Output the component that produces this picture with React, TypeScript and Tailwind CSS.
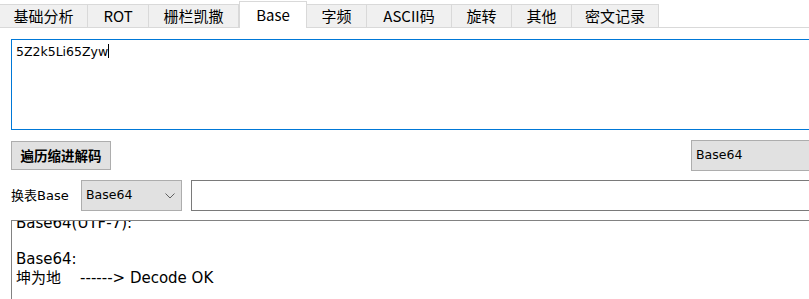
import React from "react";

const tabs = [
  { label: "基础分析", w: "w-[88px]" },
  { label: "ROT", w: "w-[61px]" },
  { label: "栅栏凯撒", w: "w-[90px]" },
  { label: "Base", w: "w-[68px]", active: true },
  { label: "字频", w: "w-[60px]" },
  { label: "ASCII码", w: "w-[85px]" },
  { label: "旋转", w: "w-[60px]" },
  { label: "其他", w: "w-[60px]" },
  { label: "密文记录", w: "w-[87px]" },
];

export default function App() {
  return (
    <div className="w-[809px] h-[299px] overflow-hidden bg-white relative text-black font-['DejaVu_Sans','Noto_Sans_CJK_SC',sans-serif]">
      {/* tab strip */}
      <div className="flex items-end h-[28px] border-b border-[#d9d9d9] font-['Noto_Sans_CJK_SC','DejaVu_Sans',sans-serif]">
        {tabs.map((t) =>
          t.active ? (
            <div
              key={t.label}
              className={`${t.w} h-[27px] -mb-px bg-white border border-b-0 border-[#d9d9d9] flex items-center justify-center text-[15px] shrink-0`}
            >
              {t.label}
            </div>
          ) : (
            <div
              key={t.label}
              className={`${t.w} h-[23px] bg-[#f0f0f0] border-t border-r border-[#d9d9d9] flex items-center justify-center text-[15px] shrink-0`}
            >
              {t.label}
            </div>
          )
        )}
      </div>

      <div className="pl-[11px]">
        {/* input textarea */}
        <div className="mt-[11px] w-[810px] h-[91px] border border-[#0078d7] px-[4px] pt-[4px] text-[12.5px] leading-[16px]">
          5Z2k5Li65Zyw<span className="inline-block w-px h-[14px] bg-black align-[-2px]" />
        </div>

        {/* button row */}
        <div className="mt-[10px] w-[809px] h-[31px] flex items-center justify-between">
          <div className="w-[100px] h-[29px] bg-[#e1e1e1] border border-[#adadad] flex items-center justify-center text-[13.5px] font-bold shrink-0 font-['Noto_Sans_CJK_SC',sans-serif]">
            遍历缩进解码
          </div>
          <div className="w-[129px] h-[31px] bg-[#e1e1e1] border border-[#adadad] flex items-center pl-[4px] text-[12.5px] shrink-0">
            Base64
          </div>
        </div>

        {/* table row */}
        <div className="mt-[9px] h-[31px] flex items-center">
          <div className="w-[70px] text-[13px] shrink-0">
            <span className="font-['Noto_Sans_CJK_SC',sans-serif]">换表</span>Base
          </div>
          <div className="w-[101px] h-[31px] bg-[#e1e1e1] border border-[#adadad] flex items-center justify-between pl-[4px] pr-[6px] text-[12.5px] shrink-0">
            <span>Base64</span>
            <svg width="10" height="6" viewBox="0 0 10 6" className="mt-[1px]">
              <path d="M0.5 0.5 L5 5 L9.5 0.5" fill="none" stroke="#606060" strokeWidth="1" />
            </svg>
          </div>
          <div className="ml-[9px] w-[630px] h-[31px] border border-[#7a7a7a] bg-white shrink-0" />
        </div>

        {/* output */}
        <div className="mt-[9px] w-[810px] h-[100px] border border-[#828282] overflow-hidden">
          <div className="-mt-[7px] pl-[4px] text-[15px] leading-[18px]">
            <div>Base64(UTF-7):</div>
            <div className="h-[18px]" />
            <div>Base64:</div>
            <div className="whitespace-pre">
              <span className="font-['Noto_Sans_CJK_SC',sans-serif]">坤为地</span>
              {"    ------> Decode OK"}
            </div>
          </div>
        </div>
      </div>
    </div>
  );
}
